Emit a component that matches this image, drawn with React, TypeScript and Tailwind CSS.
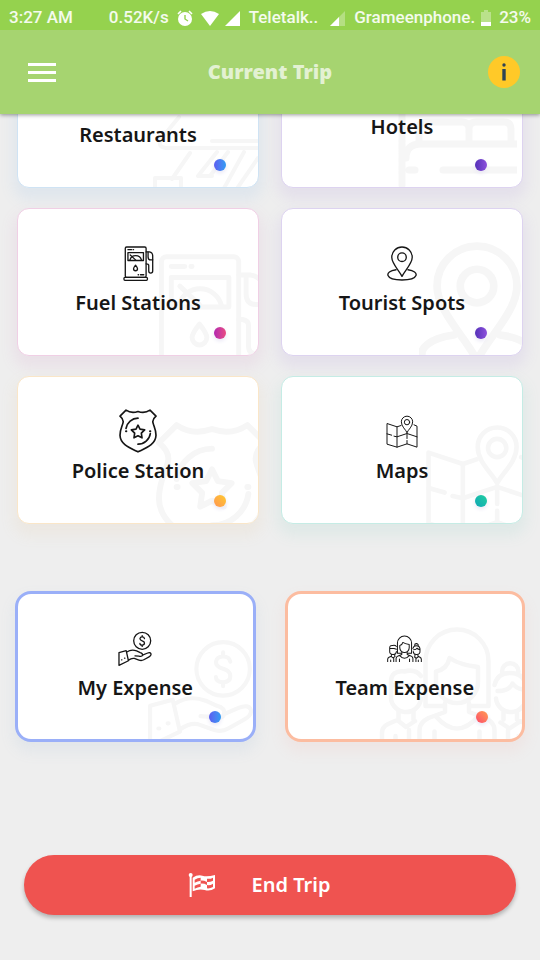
import type { ReactNode } from "react";

type IconName = "fuel" | "pin" | "police" | "map" | "money" | "team" | "dining" | "bed";

const drawings: Record<IconName, { box: string; art: ReactNode }> = {
  fuel: {
    box: "0 0 92 106",
    art: (
      <>
        <rect x="6" y="3" width="63" height="92" rx="4" />
        <rect x="2" y="95" width="71" height="9" rx="3" />
        <path d="M14 11h11M30 11h1M45 87h1M52 87h10" />
        <rect x="14" y="20" width="47" height="24" />
        <path d="M20 43a18 18 0 0 1 35 0M21 27l16 15" />
        <path d="M37 58c-4 5-6 8-6 11a6 6 0 0 0 12 0c0-3-2-6-6-11z" />
        <path d="M69 18h10q10 2 10 12v46q0 6-6 6t-6-6V59q0-5-8-5" />
        <path d="M75 19v14q0 9 8 9h6" />
      </>
    ),
  },
  pin: {
    box: "0 0 90 106",
    art: (
      <>
        <path d="M45 92C38 76 14 54 14 34a31 31 0 0 1 62 0C76 54 52 76 45 92z" />
        <circle cx="45" cy="34" r="13" />
        <path d="M27 72C-10 77-7 103 45 103s55-26 18-31" />
      </>
    ),
  },
  police: {
    box: "0 0 114 131",
    art: (
      <>
        <path d="M21 3q16 11 36 4q20 7 36-4l18 18q-12 10-9 20c3 12 9 20 9 37c-1 28-30 38-54 50C33 116 4 106 3 78c0-17 6-25 9-37q3-10-9-20z" />
        <path d="M21 58a37 37 0 0 1 36-31M94 73a37 37 0 0 1-37 32" />
        <path d="M21 66h1M93 66h1" strokeWidth="6" />
        <path d="M57 48l6 12 14 2-10 10 2 14-12-6-12 6 2-14-10-10 14-2z" />
      </>
    ),
  },
  map: {
    box: "0 0 96 98",
    art: (
      <>
        <path d="M45 31L33 35 3 25v62l30 9 30-10 30 10V33l-9-4M33 35v61" />
        <path d="M3 56l14 4M24 63l9 2 30-10 30 10" />
        <path d="M63 56v14M63 76v10" />
        <path d="M63 52C59 43 46 34 46 20a17 17 0 0 1 34 0C80 34 67 43 63 52z" />
        <circle cx="63" cy="21" r="8" />
      </>
    ),
  },
  money: {
    box: "0 0 104 107",
    art: (
      <>
        <circle cx="74" cy="30" r="26" />
        <path d="M81 23q-1-5-7-5t-7 5q0 5 7 7t7 7q0 6-7 6t-7-5M74 14v4M74 43v4" />
        <path d="M3 66l22-6 7 31-29 14z" />
        <path d="M27 64q14-9 30-3l11 5q8 2 7 8-1 5-11 3l-12-1" />
        <path d="M75 74l14-6q10-4 12 2 1 5-6 9l-16 9q-7 4-15 1l-14-5q-8-2-18 5" />
        <path d="M11 88h1M20 83h1" />
      </>
    ),
  },
  team: {
    box: "0 0 104 80",
    art: (
      <>
        <path d="M43 54H31V24a21 21 0 0 1 42 0v30H61" />
        <path d="M38 31c5-1 8-4 9-9c6 4 12 5 19 6v10a14 14 0 0 1-28 0z" />
        <path d="M44 52v6l-11 4q-6 3-6 8v9M60 52v6l11 4q6 3 6 8v9M38 61q14 16 28 0M37 71v8M67 71v8" />
        <path d="M28 34q-4-5-11-3-9-1-9 7v9a10 10 0 0 0 20 2M9 40h12l7 2" />
        <path d="M13 57v6l-7 3q-4 2-4 6v7M23 57v6M13 64l5 4 6-4M11 74v5M20 70v9" />
        <path d="M77 40q2-8 10-8 10 0 11 9v6a10 10 0 0 1-20 2M82 31a5 5 0 0 1 11 0M79 44q8 0 10-5 3 4 8 4" />
        <path d="M83 58v5M92 58v5l6 3q4 2 4 6v7M81 65l6 4 6-4M93 74v5M86 70v9" />
      </>
    ),
  },
  dining: {
    box: "0 0 106 90",
    art: (
      <>
        <path d="M27 3L9 25q-4 8 5 9h92M60 27h46" />
        <path d="M38 39L20 65M3 76V64h26v12M46 62l19-24M58 62l18-24M92 38L71 76M106 44L84 76M46 62h14" />
      </>
    ),
  },
  bed: {
    box: "0 0 120 74",
    art: (
      <>
        <path d="M5 2v70M9 45q0-14 15-14h95M12 57h6M46 57h73M22 30V16q0-7 7-7h36q7 0 7 7v14M72 16q0-7 7-7h28q7 0 7 7v14" />
      </>
    ),
  },
};

function LineIcon({ name, className, weight }: { name: IconName; className: string; weight: number }) {
  const { box, art } = drawings[name];
  return (
    <svg
      viewBox={box}
      className={className}
      fill="none"
      stroke="currentColor"
      strokeWidth={weight}
      strokeLinecap="round"
      strokeLinejoin="round"
      aria-hidden="true"
    >
      {art}
    </svg>
  );
}

type CardData = {
  label: string;
  icon: IconName;
  iconSize: string;
  iconBox?: string;
  weight: number;
  frame: string;
  dot: string;
  mark: string;
  markWeight: number;
};

const places: CardData[] = [
  {
    label: "Restaurants", icon: "dining", iconSize: "w-8 h-7", weight: 4,
    frame: "border-[#cfe3f4] shadow-[0_8px_14px_4px_#dfe6ed]",
    dot: "right-8 bg-linear-to-r from-[#5a5cf0] to-[#2f9bf3]",
    mark: "left-[134px] top-[73px] w-[106px] h-[90px]", markWeight: 4,
  },
  {
    label: "Hotels", icon: "bed", iconSize: "w-8 h-5", iconBox: "h-9", weight: 4,
    frame: "border-[#ddd3f0] shadow-[0_8px_14px_4px_#e4e0eb]",
    dot: "right-[35px] bg-linear-to-r from-[#5530b8] to-[#8d50dc]",
    mark: "left-[115px] top-[72px] w-[120px] h-[74px]", markWeight: 7,
  },
  {
    label: "Fuel Stations", icon: "fuel", iconSize: "w-[31px] h-[35px]", weight: 4,
    frame: "border-[#f0cfe5] shadow-[0_8px_14px_4px_#eae1e8]",
    dot: "right-8 bg-linear-to-r from-[#b324b0] to-[#ea4a80]",
    mark: "left-[136px] top-[44px] w-[113px] h-[130px]", markWeight: 4,
  },
  {
    label: "Tourist Spots", icon: "pin", iconSize: "w-[30px] h-[35px]", weight: 4,
    frame: "border-[#ddd3f0] shadow-[0_8px_14px_4px_#e4e0eb]",
    dot: "right-[35px] bg-linear-to-r from-[#5530b8] to-[#8d50dc]",
    mark: "left-[137px] top-[33px] w-[116px] h-[137px]", markWeight: 6,
  },
  {
    label: "Police Station", icon: "police", iconSize: "w-[38px] h-[44px]", weight: 5,
    frame: "border-[#fae6c8] shadow-[0_8px_14px_4px_#ece8e2]",
    dot: "right-8 bg-linear-to-tr from-[#ff9550] to-[#ffc928]",
    mark: "left-[138px] top-[45px] w-[112px] h-[129px]", markWeight: 6,
  },
  {
    label: "Maps", icon: "map", iconSize: "w-[32px] h-[33px]", weight: 3,
    frame: "border-[#c5ece5] shadow-[0_8px_14px_4px_#dfe9e7]",
    dot: "right-[35px] bg-linear-to-tr from-[#12a6b5] to-[#22cf9e]",
    mark: "left-[143px] top-[47px] w-[110px] h-[112px]", markWeight: 4,
  },
];

const expenses: CardData[] = [
  {
    label: "My Expense", icon: "money", iconSize: "w-[34px] h-[35px]", weight: 4,
    frame: "border-[#9aaff8] shadow-[0_8px_14px_2px_#e2e6ea]",
    dot: "right-8 bg-linear-to-r from-[#5a5cf0] to-[#2f9bf3]",
    mark: "left-[129px] top-[44px] w-[107px] h-[110px]", markWeight: 4,
  },
  {
    label: "Team Expense", icon: "team", iconSize: "w-[35px] h-[27px]", weight: 3,
    frame: "border-[#fcbca0] shadow-[0_8px_14px_2px_#eee5e4]",
    dot: "right-[34px] bg-linear-to-tr from-[#fb4669] to-[#ff9a50]",
    mark: "left-[91px] top-[31px] w-[156px] h-[120px]", markWeight: 3,
  },
];

function Card({ data, big = false }: { data: CardData; big?: boolean }) {
  return (
    <button
      type="button"
      className={`relative flex flex-col items-center justify-start overflow-hidden bg-white ${data.frame} ${
        big ? "h-[151px] rounded-2xl border-3 pt-8" : "h-[148px] rounded-xl border pt-8"
      }`}
    >
      <LineIcon name={data.icon} weight={data.markWeight} className={`absolute max-w-none text-[#f6f6f6] ${data.mark}`} />
      <span className={`relative flex items-center ${data.iconBox ?? "h-11"}`}>
        <LineIcon name={data.icon} weight={data.weight} className={`text-[#161616] ${data.iconSize}`} />
      </span>
      <span className="relative mt-1 text-xl leading-7 font-semibold whitespace-nowrap text-[#161616]">{data.label}</span>
      <span className={`absolute bottom-4 size-3 rounded-full shadow-[0_2px_4px_#e8e6f4] ${data.dot}`} />
    </button>
  );
}

function Signal({ weak = false }: { weak?: boolean }) {
  return (
    <svg viewBox="0 0 15 15" className="size-[15px] shrink-0" fill="white" aria-hidden="true">
      <path d="M15 0v15H0z" opacity={weak ? 0.3 : 1} />
      {weak && <path d="M9 6v9H0z" />}
    </svg>
  );
}

function StatusBar() {
  return (
    <div className="flex h-[30px] items-center bg-[#95d24e] px-[9px] pt-[6px] font-[Roboto,sans-serif] text-[17px] font-medium whitespace-nowrap text-white/90">
      <span className="mr-auto">3:27 AM</span>
      <span>0.52K/s</span>
      <svg viewBox="0 0 16 16" className="mx-2 size-4 shrink-0" fill="none" stroke="white" aria-hidden="true">
        <circle cx="8" cy="9" r="7" fill="white" stroke="none" />
        <path d="M1 4l3-3M15 4l-3-3" strokeWidth="1.6" />
        <path d="M8 5v4l3 2" stroke="#95d24e" strokeWidth="1.4" />
      </svg>
      <svg viewBox="0 0 18 15" className="mr-[6px] h-[15px] w-[18px] shrink-0" fill="white" aria-hidden="true">
        <path d="M0 3Q9-3 18 3L9 15z" />
      </svg>
      <Signal />
      <span className="ml-[9px]">Teletalk..</span>
      <span className="ml-3 flex"><Signal weak /></span>
      <span className="ml-[9px]">Grameenphone.</span>
      <svg viewBox="0 0 10 16" className="mr-2 ml-[6px] h-4 w-[10px] shrink-0" fill="white" aria-hidden="true">
        <path d="M3 0h4v2h3v14H0V2h3z" opacity="0.35" />
        <path d="M0 12h10v4H0z" />
      </svg>
      <span>23%</span>
    </div>
  );
}

export default function App() {
  return (
    <div className="min-h-screen bg-[#eeeeee] font-['Noto_Sans',sans-serif]">
      <header className="sticky top-0 z-10 bg-[#a6d470] shadow-[0_1px_4px_#00000066]">
        <StatusBar />
        <div className="grid h-[84px] grid-cols-[1fr_auto_1fr] items-center px-5">
          <button type="button" aria-label="Menu" className="flex w-11 flex-col gap-[5px] justify-self-start px-2">
            <span className="h-[3px] w-7 bg-white" />
            <span className="h-[3px] w-7 bg-white" />
            <span className="h-[3px] w-7 bg-white" />
          </button>
          <h1 className="text-xl leading-7 font-black text-white/70">Current Trip</h1>
          <button
            type="button"
            aria-label="Trip information"
            className="flex size-8 items-center justify-center justify-self-end rounded-full bg-[#ffc928]"
          >
            <svg viewBox="0 0 4 18" className="h-[18px] w-1" fill="#2f4354" aria-hidden="true">
              <circle cx="2" cy="2" r="1.7" />
              <rect x="0.3" y="6" width="3.4" height="11.5" />
            </svg>
          </button>
        </div>
      </header>

      <main>
        <section aria-label="Places" className="-mt-[74px] grid grid-cols-2 gap-x-[22px] gap-y-5 px-[17px]">
          {places.map((p) => (
            <Card key={p.label} data={p} />
          ))}
        </section>
        <section aria-label="Expenses" className="mt-[67px] grid grid-cols-2 gap-x-[29px] px-[15px]">
          {expenses.map((e) => (
            <Card key={e.label} data={e} big />
          ))}
        </section>
        <div className="px-6 pt-[113px] pb-[45px]">
          <button
            type="button"
            className="flex h-[60px] w-full items-center justify-center gap-9 rounded-full bg-[#ef5350] pr-[22px] text-xl font-semibold text-white shadow-[0_3px_4px_#00000040]"
          >
            <svg viewBox="0 0 80 72" className="h-6 w-7" aria-hidden="true">
              <circle cx="6" cy="6" r="6" fill="white" />
              <rect x="3" y="6" width="6" height="66" fill="white" />
              <path d="M12 14Q27 4 41 8T79 6V46Q64 56 48 51T12 55z" fill="white" />
              <path
                d="M18 20q9-6 18-6v9q-9 1-18 6zM36 23q9-1 19 4v9q-9-5-19-4zM55 17q9 2 18-3v9q-9 5-18 4zM18 38q9-5 18-6v9q-9 1-18 6zM55 36q9 2 18-4v10q-9 5-18 4z"
                fill="#ef5350"
              />
            </svg>
            End Trip
          </button>
        </div>
      </main>
    </div>
  );
}
